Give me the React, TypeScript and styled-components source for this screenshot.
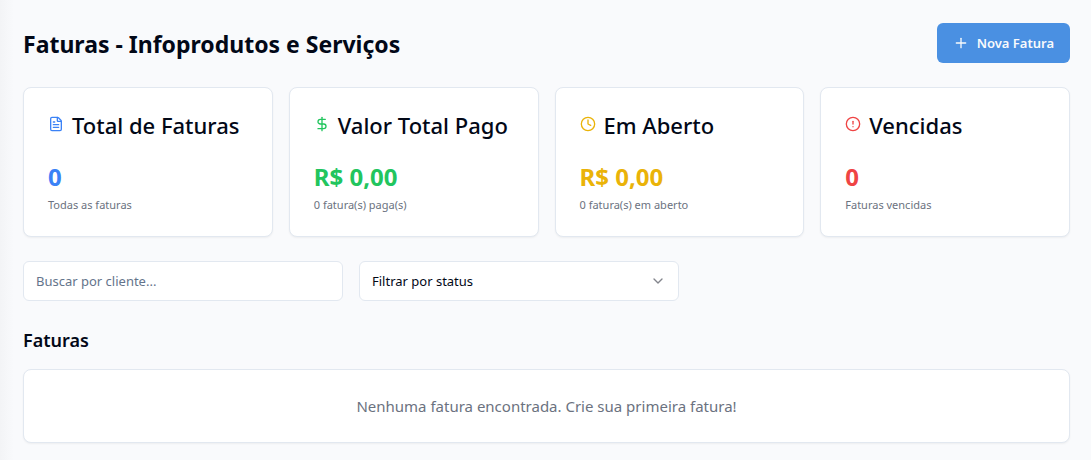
import React from 'react';
import styled, { createGlobalStyle } from 'styled-components';
import { ChevronDown, CircleAlert, Clock, DollarSign, FileText, Plus } from 'lucide-react';
import type { LucideIcon } from 'lucide-react';

const GlobalStyle = createGlobalStyle`
  *, *::before, *::after { box-sizing: border-box; }
  body {
    margin: 0;
    background: #f9fafc;
    color: #020817;
    font-family: 'Noto Sans', 'Open Sans', sans-serif;
    font-size: 16px;
    line-height: 24px;
  }
  h1, h2, h3, p { margin: 0; }
  button, input, select { font-family: inherit; }
`;

const Page = styled.main`
  min-height: 100vh;
  padding: 23px 21px 17px 23px;
  background: linear-gradient(to right, #f3f4f6, #f9fafc 14px);
`;

const Header = styled.header`
  display: flex;
  align-items: center;
  justify-content: space-between;
  margin-bottom: 24px;
`;

const PageTitle = styled.h1`
  padding-top: 2px;
  font-size: 23px;
  line-height: 32px;
  font-weight: 700;
`;

const PrimaryButton = styled.button`
  display: inline-flex;
  align-items: center;
  gap: 8px;
  height: 40px;
  padding: 0 16px;
  border: 0;
  border-radius: 6px;
  background: #4a90e2;
  color: #f8fafc;
  font-size: 13px;
  font-weight: 600;
  line-height: 20px;
  cursor: pointer;
`;

const Summary = styled.section`
  display: grid;
  grid-template-columns: repeat(4, minmax(0, 1fr));
  gap: 16px;
  margin-bottom: 24px;

  @media (max-width: 767px) {
    grid-template-columns: minmax(0, 1fr);
  }
`;

const Card = styled.article`
  border: 1px solid #e2e8f0;
  border-radius: 8px;
  background: #fff;
  box-shadow: 0 1px 2px rgba(0, 0, 0, 0.05);
`;

const StatCard = styled(Card)`
  padding: 20px 24px 23px;
`;

const StatHeader = styled.div<{ $tone: string }>`
  display: flex;
  align-items: center;
  gap: 8px;
  margin-bottom: 19px;

  svg {
    flex: none;
    color: ${({ $tone }) => $tone};
    margin-bottom: 2px;
  }
`;

const StatTitle = styled.h3`
  font-size: 22px;
  line-height: 34px;
  font-weight: 500;
  white-space: nowrap;
`;

const StatValue = styled.p<{ $tone: string }>`
  margin-bottom: 4px;
  color: ${({ $tone }) => $tone};
  font-size: 24px;
  line-height: 32px;
  font-weight: 700;
`;

const StatNote = styled.p`
  color: #6b7280;
  font-size: 11px;
  line-height: 16px;
`;

const Filters = styled.form`
  display: flex;
  flex-wrap: wrap;
  gap: 16px;
  margin-bottom: 24px;
`;

const Field = styled.div`
  position: relative;
  flex: 0 1 320px;

  svg {
    position: absolute;
    top: 12px;
    right: 13px;
    color: #83858c;
    pointer-events: none;
  }
`;

const controlStyle = `
  display: block;
  width: 100%;
  height: 40px;
  padding: 0 12px;
  border: 1px solid #e2e8f0;
  border-radius: 6px;
  background: #fff;
  color: #020817;
  font-size: 13px;
  line-height: 20px;
`;

const TextInput = styled.input`
  ${controlStyle}
  &::placeholder { color: #64748b; opacity: 1; }
`;

const Select = styled.select`
  ${controlStyle}
  appearance: none;
`;

const SectionTitle = styled.h2`
  margin-bottom: 14px;
  font-size: 18px;
  line-height: 30px;
  font-weight: 600;
`;

const EmptyCard = styled(Card)`
  padding: 24px;
  color: #6b7280;
  text-align: center;
  font-size: 15px;
`;

type Stat = { title: string; value: string; note: string; tone: string; icon: LucideIcon };

const stats: Stat[] = [
  { title: 'Total de Faturas', value: '0', note: 'Todas as faturas', tone: '#3b82f6', icon: FileText },
  { title: 'Valor Total Pago', value: 'R$ 0,00', note: '0 fatura(s) paga(s)', tone: '#22c55e', icon: DollarSign },
  { title: 'Em Aberto', value: 'R$ 0,00', note: '0 fatura(s) em aberto', tone: '#eab308', icon: Clock },
  { title: 'Vencidas', value: '0', note: 'Faturas vencidas', tone: '#ef4444', icon: CircleAlert },
];

export default function App() {
  return (
    <>
      <GlobalStyle />
      <Page>
        <Header>
          <PageTitle>Faturas - Infoprodutos e Serviços</PageTitle>
          <PrimaryButton type="button">
            <Plus size={16} />
            Nova Fatura
          </PrimaryButton>
        </Header>

        <Summary>
          {stats.map(({ title, value, note, tone, icon: Icon }) => (
            <StatCard key={title}>
              <StatHeader $tone={tone}>
                <Icon size={16} />
                <StatTitle>{title}</StatTitle>
              </StatHeader>
              <StatValue $tone={tone}>{value}</StatValue>
              <StatNote>{note}</StatNote>
            </StatCard>
          ))}
        </Summary>

        <Filters>
          <Field>
            <TextInput type="text" aria-label="Buscar por cliente" placeholder="Buscar por cliente..." />
          </Field>
          <Field>
            <Select aria-label="Filtrar por status" defaultValue="">
              <option value="">Filtrar por status</option>
            </Select>
            <ChevronDown size={16} />
          </Field>
        </Filters>

        <SectionTitle>Faturas</SectionTitle>
        <EmptyCard>
          <p>Nenhuma fatura encontrada. Crie sua primeira fatura!</p>
        </EmptyCard>
      </Page>
    </>
  );
}
